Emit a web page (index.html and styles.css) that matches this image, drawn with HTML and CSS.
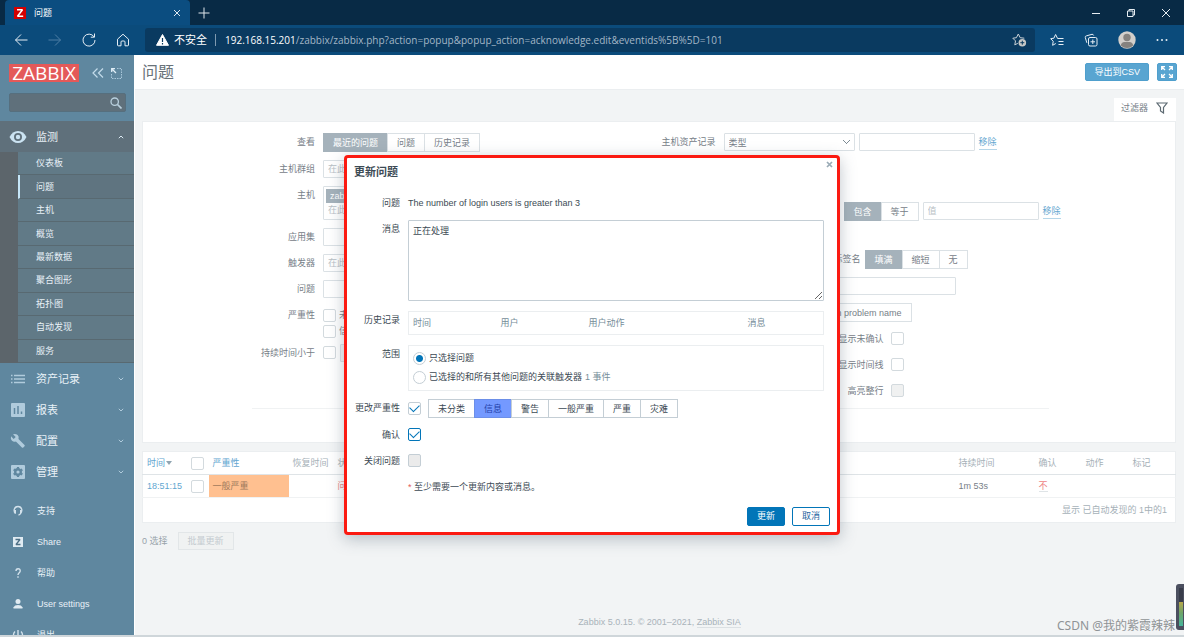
FILE: index.html
```html
<!DOCTYPE html>
<html lang="zh-CN">
<head>
<meta charset="utf-8">
<title>问题</title>
<link rel="stylesheet" href="styles.css">
</head>
<body>
<header class="browser">
  <div class="tabstrip">
    <div class="tab">
      <svg class="favicon" width="12" height="12" viewBox="0 0 12 12"><rect width="12" height="12" fill="#d40000"/><path d="M3 2.800h5.500L3.500 9.200H9.200" fill="none" stroke="#fff" stroke-width="1.500" stroke-linejoin="bevel"/></svg>
      <span class="tab-title">问题</span>
      <button class="bare" aria-label="关闭标签页"><svg width="8" height="8" viewBox="0 0 8 8"><path d="M1 1l6 6M7 1L1 7" stroke="#dfe9f2" fill="none"/></svg></button>
    </div>
    <button class="bare newtab" aria-label="新建标签页"><svg width="12" height="12" viewBox="0 0 12 12"><path d="M6 .5v11M.5 6h11" stroke="#dfe6ec" fill="none"/></svg></button>
    <div class="window-buttons">
      <button class="bare" aria-label="最小化"><svg width="10" height="10" viewBox="0 0 10 10"><path d="M1 5.500h8" stroke="#e6edf2"/></svg></button>
      <button class="bare" aria-label="还原"><svg width="10" height="10" viewBox="0 0 10 10"><path d="M1.500 3h5.500v5.500H1.500zM3 3V1.500h5.500V7H7" stroke="#e6edf2" fill="none"/></svg></button>
      <button class="bare" aria-label="关闭"><svg width="10" height="10" viewBox="0 0 10 10"><path d="M1 1l8 8M9 1L1 9" stroke="#e6edf2"/></svg></button>
    </div>
  </div>
  <div class="toolbar">
    <div class="nav-buttons">
      <button class="bare" aria-label="后退"><svg width="14" height="14" viewBox="0 0 14 14"><path d="M13.500 7H1.500M7 1.500L1.500 7 7 12.500" stroke="#e6eef5" fill="none"/></svg></button>
      <button class="bare" aria-label="前进"><svg width="14" height="14" viewBox="0 0 14 14"><path d="M.5 7h12M7 1.500L12.500 7 7 12.500" stroke="#4f7fa5" fill="none"/></svg></button>
      <button class="bare" aria-label="刷新"><svg width="14" height="14" viewBox="0 0 14 14"><path d="M12 3.800A6 6 0 1 0 13 7M12.500.5v3.700H8.800" stroke="#e6eef5" fill="none"/></svg></button>
      <button class="bare" aria-label="主页"><svg width="14" height="14" viewBox="0 0 14 14"><path d="M1.500 6.200L7 1.200l5.500 5V12q0 .8-.8.8H9V9q0-1-1-1H6Q5 8 5 9v3.800H2.300q-.8 0-.8-.8z" stroke="#e6eef5" fill="none"/></svg></button>
    </div>
    <div class="address">
      <svg width="13" height="12" viewBox="0 0 13 12"><path d="M6.500.5L12.500 11.300H.5z" fill="#fff" stroke="#fff" stroke-linejoin="round"/><path d="M6.500 4v4M6.500 9v1.500" stroke="#0a3a60" stroke-width="1.200"/></svg>
      <span class="insecure">不安全</span>
      <span class="address-sep"></span>
      <span class="url"><b>192.168.15.201</b>/zabbix/zabbix.php?action=popup&amp;popup_action=acknowledge.edit&amp;eventids%5B%5D=101</span>
      <svg width="15" height="14" viewBox="0 0 15 14"><path d="M12.300 5.200L8.200 4.700 6.300 1 4.400 4.700.8 5.200l2.700 2.700-.7 4 3-1.600" stroke="#c8d0d6" fill="none"/><circle cx="10.300" cy="9.700" r="3.800" fill="#c8c8c6"/><path d="M10.300 7.700v4M8.300 9.700h4" stroke="#0a3a60"/></svg>
    </div>
    <div class="tool-buttons">
      <button class="bare" aria-label="收藏夹"><svg width="14" height="14" viewBox="0 0 14 14"><path d="M13.500 5.500H7.600L5.600 1.500 3.900 5.200.7 5.700l2.500 2.600-.6 4 3.200-1.800M8.500 8.500h5M8.500 11.500h5" stroke="#e6eef5" fill="none"/></svg></button>
      <button class="bare" aria-label="集锦"><svg width="14" height="14" viewBox="0 0 14 14"><rect x="4.500" y="4.500" width="8.500" height="8.500" rx="1.500" stroke="#e6eef5" fill="none"/><path d="M8.800 6.500v4.500M6.500 8.800h4.500M2.800 9.800L1.300 4.500q-.3-1.300 1-1.600L8 1.300q1.300-.2 1.700 1.200" stroke="#e6eef5" fill="none"/></svg></button>
      <button class="bare" aria-label="个人资料"><svg width="18" height="18" viewBox="0 0 18 18"><circle cx="9" cy="9" r="8.700" fill="#d2cfcb"/><circle cx="9" cy="6.500" r="3.700" fill="#85827f"/><path d="M2.800 14.500q.5-3.500 3.700-3.500h5q3.200 0 3.700 3.500A8.700 8.700 0 0 1 2.800 14.500" fill="#85827f"/></svg></button>
      <button class="bare" aria-label="设置及其他"><svg width="12" height="4" viewBox="0 0 12 4"><circle cx="1.500" cy="2" r="1" fill="#e6eef5"/><circle cx="6" cy="2" r="1" fill="#e6eef5"/><circle cx="10.500" cy="2" r="1" fill="#e6eef5"/></svg></button>
    </div>
  </div>
</header>

<div class="app">
  <aside class="sidebar">
    <div class="brand">
      <a class="logo" href="#">ZABBIX</a>
      <button class="bare" aria-label="收起"><svg width="12" height="12" viewBox="0 0 12 12"><path d="M5.500 1.500L1 6l4.500 4.500M11 1.500L6.500 6l4.500 4.500" stroke="#c3dbea" stroke-width="1.200" fill="none"/></svg></button>
      <button class="bare" aria-label="隐藏"><svg width="11" height="11" viewBox="0 0 11 11"><path d="M6 .5h4.500v10H.5V6" stroke="#a9c7da" fill="none" stroke-dasharray="1.500 1"/><path d="M1.500 1.500l3.500 3.500M.7 4V.7H4" stroke="#e0eef7" fill="none" stroke-width="1.300"/></svg></button>
    </div>
    <form class="search">
      <input type="search" aria-label="搜索">
      <button class="bare" type="button" aria-label="搜索"><svg width="12" height="12" viewBox="0 0 12 12"><circle cx="4.700" cy="4.700" r="3.700" stroke="#b9d0de" stroke-width="1.300" fill="none"/><path d="M7.500 7.500l4 4" stroke="#b9d0de" stroke-width="1.700"/></svg></button>
    </form>
    <nav class="menu">
      <a class="menu-item open" href="#"><svg width="18" height="18" viewBox="0 0 18 18"><path d="M.5 9Q3.500 3 9 3t8.500 6Q14.500 15 9 15T.5 9z" fill="#cbe3f2"/><circle cx="9" cy="9" r="3.100" fill="#cbe3f2" stroke="#5f707b" stroke-width="1.800"/></svg><span>监测</span><svg width="6" height="4" viewBox="0 0 6 4"><path d="M.8 3.200L3 1l2.200 2.200" stroke="#dcebf4" fill="none"/></svg></a>
      <ul class="submenu">
        <li><a href="#">仪表板</a></li>
        <li class="active"><a href="#">问题</a></li>
        <li><a href="#">主机</a></li>
        <li><a href="#">概览</a></li>
        <li><a href="#">最新数据</a></li>
        <li><a href="#">聚合图形</a></li>
        <li><a href="#">拓扑图</a></li>
        <li><a href="#">自动发现</a></li>
        <li><a href="#">服务</a></li>
      </ul>
      <a class="menu-item" href="#"><svg width="18" height="18" viewBox="0 0 18 18"><path d="M2 5.500h1.500M5 5.500h11M2 9h1.500M5 9h11M2 12.500h1.500M5 12.500h11" stroke="#b0cbdc" stroke-width="1.700"/></svg><span>资产记录</span><svg width="6" height="4" viewBox="0 0 6 4"><path d="M.8.8L3 3 5.200.8" stroke="#b0cbdc" fill="none"/></svg></a>
      <a class="menu-item" href="#"><svg width="18" height="18" viewBox="0 0 18 18"><rect x="2" y="2" width="14" height="14" rx="1" fill="#b0cbdc"/><path d="M5.500 7v6M9 5v8M12.500 10.500V13" stroke="#5f879f" stroke-width="1.500"/></svg><span>报表</span><svg width="6" height="4" viewBox="0 0 6 4"><path d="M.8.8L3 3 5.200.8" stroke="#b0cbdc" fill="none"/></svg></a>
      <a class="menu-item" href="#"><svg width="18" height="18" viewBox="0 0 18 18"><path d="M4 2.300l2.700 2.600-2 2L2 4.300Q1.300 7 3 8.700q1.700 1.600 3.900.8l6 6q.7.700 1.400 0l1.200-1.200q.7-.7 0-1.400l-6-6q.8-2.200-.9-3.900Q6.700 1.500 4 2.300z" fill="#b0cbdc"/></svg><span>配置</span><svg width="6" height="4" viewBox="0 0 6 4"><path d="M.8.8L3 3 5.200.8" stroke="#b0cbdc" fill="none"/></svg></a>
      <a class="menu-item" href="#"><svg width="18" height="18" viewBox="0 0 18 18"><rect x="2" y="2" width="14" height="14" rx="1" fill="#b0cbdc"/><circle cx="9" cy="9" r="2.800" fill="none" stroke="#5f879f" stroke-width="2.400"/><path d="M9 4v1.500M9 12.500V14M4.700 6.500l1.300.8M12 10.700l1.300.8M4.700 11.500l1.300-.8M12 7.300l1.300-.8" stroke="#5f879f" stroke-width="2.200"/></svg><span>管理</span><svg width="6" height="4" viewBox="0 0 6 4"><path d="M.8.8L3 3 5.200.8" stroke="#b0cbdc" fill="none"/></svg></a>
    </nav>
    <nav class="menu user-menu">
      <a class="menu-item" href="#"><svg width="18" height="18" viewBox="0 0 18 18"><path d="M6.500 11.500Q4.800 10 5.200 7.500 6 4.500 9 4.500t3.800 3q.4 2.500-1.600 4.500l-1.700 1.200" stroke="#d3e2ec" stroke-width="1.300" fill="none"/><path d="M5 8h2v3.500H5.800zM11 8h2l-.8 3.500H11z" fill="#d3e2ec"/></svg><span>支持</span></a>
      <a class="menu-item" href="#"><svg width="18" height="18" viewBox="0 0 18 18"><rect x="4" y="4" width="10" height="10" fill="#e0ebf2"/><path d="M6.500 6.500h4.500l-4 5h4.500" stroke="#4d6f85" stroke-width="1.300" stroke-linejoin="bevel" fill="none"/></svg><span>Share</span></a>
      <a class="menu-item" href="#"><svg width="18" height="18" viewBox="0 0 18 18"><path d="M7 7q0-2.200 2.100-2.200T11.200 7Q11.200 8 10 9q-1 .8-1 2M9 12.300v1.500" stroke="#d3e2ec" stroke-width="1.400" fill="none"/></svg><span>帮助</span></a>
      <a class="menu-item" href="#"><svg width="18" height="18" viewBox="0 0 18 18"><circle cx="9" cy="6.500" r="2.500" fill="#e0ebf2"/><path d="M4.500 13.500v-1.200Q5.500 10 9 10t4.500 2.300v1.200z" fill="#e0ebf2"/></svg><span>User settings</span></a>
      <a class="menu-item" href="#"><svg width="18" height="18" viewBox="0 0 18 18"><path d="M6 5.500a4.500 4.500 0 1 0 6 0M9 4v5" stroke="#d3e2ec" stroke-width="1.400" fill="none"/></svg><span>退出</span></a>
    </nav>
  </aside>

  <main class="content">
    <div class="page-header">
      <h1>问题</h1>
      <button class="btn-faded">导出到CSV</button>
      <button class="btn-faded btn-full" aria-label="全屏"><svg width="14" height="14" viewBox="0 0 14 14"><path d="M1.700 5V1.700H5M9 1.700h3.300V5M12.300 9v3.300H9M5 12.300H1.700V9M2 2l3 3M12 2L9 5M12 12L9 9M2 12l3-3" stroke="#fff" stroke-width="1.300" fill="none"/></svg></button>
    </div>

    <div class="filter-tab"><a href="#">过滤器 <svg width="12" height="12" viewBox="0 0 12 12"><path d="M1 1h10L7.500 5.500V11l-3-2V5.500z" stroke="#5d6a72" stroke-width="1.200" fill="none"/></svg></a></div>
    <form class="filter">
      <div class="filter-forms">
        <div class="form-col left">
          <div class="row"><span class="lbl">查看</span><div class="seg"><button type="button" class="on">最近的问题</button><button type="button">问题</button><button type="button">历史记录</button></div></div>
          <div class="row"><label class="lbl" for="f-groups">主机群组</label><input class="text grow" id="f-groups" placeholder="在此输入搜索"></div>
          <div class="row"><label class="lbl" for="f-hosts">主机</label><div class="multi grow"><span class="chip">zabbix</span><input id="f-hosts" placeholder="在此输入搜索"></div></div>
          <div class="row"><label class="lbl" for="f-app">应用集</label><input class="text grow" id="f-app"></div>
          <div class="row"><label class="lbl" for="f-trig">触发器</label><input class="text grow" id="f-trig" placeholder="在此输入搜索"></div>
          <div class="row"><label class="lbl" for="f-prob">问题</label><input class="text grow" id="f-prob"></div>
          <div class="row"><span class="lbl">严重性</span><div class="checks"><label><input type="checkbox">未分类</label><label><input type="checkbox">信息</label></div></div>
          <div class="row"><label class="lbl" for="f-age">持续时间小于</label><input type="checkbox" id="f-age"><input class="text days" aria-label="天数" disabled></div>
        </div>
        <div class="form-col right">
          <div class="row"><label class="lbl" for="f-inv">主机资产记录</label><select id="f-inv" class="inv"><option>类型</option></select><input class="text field" aria-label="资产值"><a class="act" href="#">移除</a></div>
          <div class="row tags"><span class="lbl"></span><input class="text field" aria-label="标记"><div class="seg"><button type="button" class="on">包含</button><button type="button">等于</button></div><input class="text field" placeholder="值" aria-label="标记值"><a class="act" href="#">移除</a></div>
          <div class="row"><span class="lbl"></span><span class="inline-lbl names">标签名</span><div class="seg"><button type="button" class="on">填满</button><button type="button">缩短</button><button type="button">无</button></div></div>
          <div class="row"><span class="lbl"></span><input class="text priority" aria-label="标签显示优先级"></div>
          <div class="row"><span class="lbl"></span><div class="seg opdata"><button type="button">With problem name</button></div></div>
          <div class="row"><span class="lbl"></span><label class="inline-lbl" for="f-unack">只显示未确认</label><input type="checkbox" id="f-unack"></div>
          <div class="row"><span class="lbl"></span><label class="inline-lbl" for="f-line">显示时间线</label><input type="checkbox" id="f-line"></div>
          <div class="row"><span class="lbl"></span><label class="inline-lbl" for="f-hl">高亮整行</label><input type="checkbox" id="f-hl" disabled></div>
        </div>
      </div>
      <div class="filter-buttons"><button type="button" class="btn-faded">应用</button></div>
    </form>

    <table class="list">
      <colgroup><col class="c-time"><col class="c-check"><col class="c-sev"><col class="c-rec"><col><col class="c-dur"><col class="c-s"><col class="c-s"><col class="c-s"></colgroup>
      <thead><tr><th><a href="#">时间 <svg width="6" height="4" viewBox="0 0 6 4"><path d="M0 0h6L3 4z" fill="#8fa4b1"/></svg></a></th><th><input type="checkbox" aria-label="全选"></th><th><a href="#">严重性</a></th><th>恢复时间</th><th>状态</th><th>持续时间</th><th>确认</th><th>动作</th><th>标记</th></tr></thead>
      <tbody><tr><td><a href="#">18:51:15</a></td><td><input type="checkbox" aria-label="选择"></td><td class="average">一般严重</td><td></td><td class="problem">问题</td><td>1m 53s</td><td><a class="no" href="#">不</a></td><td></td><td></td></tr></tbody>
      <tfoot><tr><td colspan="9">显示 已自动发现的 1中的1</td></tr></tfoot>
    </table>
    <div class="bulk"><span>0 选择</span><button disabled>批量更新</button></div>
    <footer class="foot">Zabbix 5.0.15. © 2001–2021, <a href="#">Zabbix SIA</a></footer>
  </main>
</div>
<div class="taskbar"></div>

<div class="overlay">
  <section class="dialog" role="dialog" aria-labelledby="dlg-title">
    <button class="bare dialog-close" aria-label="关闭"><svg width="7" height="7" viewBox="0 0 7 7"><path d="M1 1l5 5M6 1L1 6" stroke="#9aabb6" stroke-width="1.700"/></svg></button>
    <h2 id="dlg-title">更新问题</h2>
    <form class="dialog-form">
      <span class="lbl">问题</span><div class="value">The number of login users is greater than 3</div>
      <label class="lbl" for="msg">消息</label><textarea id="msg">正在处理</textarea>
      <span class="lbl boxed">历史记录</span>
      <table class="history boxed"><colgroup><col class="h-a"><col class="h-a"><col class="h-b"><col></colgroup><thead><tr><th>时间</th><th>用户</th><th>用户动作</th><th>消息</th></tr></thead></table>
      <span class="lbl boxed">范围</span>
      <div class="scope boxed"><label><input type="radio" name="scope" checked>只选择问题</label><label><input type="radio" name="scope">已选择的和所有其他问题的关联触发器 <small>1 事件</small></label></div>
      <label class="lbl" for="chg">更改严重性</label>
      <div class="severity"><input type="checkbox" id="chg" checked><div class="seg"><button type="button">未分类</button><button type="button" class="info">信息</button><button type="button">警告</button><button type="button">一般严重</button><button type="button">严重</button><button type="button">灾难</button></div></div>
      <label class="lbl" for="ack">确认</label><div class="value"><input type="checkbox" id="ack" class="focused" checked></div>
      <label class="lbl" for="cls">关闭问题</label><div class="value"><input type="checkbox" id="cls" disabled></div>
      <span></span><div class="value"><i class="star">*</i> 至少需要一个更新内容或消息。</div>
    </form>
    <div class="dialog-buttons"><button class="primary">更新</button><button>取消</button></div>
  </section>
</div>
<div class="meter"><span></span></div>
<div class="credit">CSDN @我的紫霞辣辣</div>
</body>
</html>
```

FILE: styles.css
```css
* { box-sizing: border-box; }
body {
  margin: 0;
  height: 100vh;
  display: flex;
  flex-direction: column;
  overflow: hidden;
  position: relative;
  background: #f2f4f5;
  color: #778088;
  font: 9px/14px "Liberation Sans", "Noto Sans CJK SC", sans-serif;
}
a { color: inherit; text-decoration: none; }
button, input, select, textarea { font: inherit; color: inherit; margin: 0; }
svg { display: block; flex: none; }
.bare { border: 0; padding: 0; background: none; display: flex; align-items: center; justify-content: center; }

/* browser frame */
.browser { flex: none; color: #fff; }
.tabstrip { display: flex; align-items: center; height: 25px; padding-left: 5px; background: #082a45; }
.tab { width: 185px; height: 25px; display: flex; align-items: center; gap: 8px; padding: 0 9px; background: #0b4d80; border-radius: 4px 4px 0 0; }
.tab-title { flex: 1; }
.newtab { margin-left: 8px; }
.window-buttons { margin-left: auto; display: flex; gap: 25px; padding-right: 13px; }
.toolbar { display: flex; align-items: center; height: 30px; background: #0b4b7b; }
.nav-buttons { display: flex; gap: 20px; padding-left: 14px; width: 145px; }
.address { flex: 1; min-width: 0; height: 24px; display: flex; align-items: center; padding: 0 8px 0 11px; background: #0a3a60; border-radius: 3px; font: 10px/16px "Open Sans", "Noto Sans CJK SC", sans-serif; }
.insecure { margin-left: 5px; font-size: 11px; }
.address-sep { width: 1px; height: 12px; background: #7f9ab0; margin: 0 9px 0 8px; }
.url { flex: 1; color: #a3b6c6; white-space: nowrap; overflow: hidden; }
.url b { font-weight: 400; color: #fff; }
.tool-buttons { display: flex; align-items: center; gap: 20px; padding: 0 16px 0 15px; }

/* sidebar */
.app { flex: 1; min-height: 0; display: flex; }
.sidebar { width: 134px; flex: none; overflow: hidden; background: #5f879f; color: #e8f1f7; }
.brand { display: flex; align-items: center; padding: 9px 12px 0 9px; }
.logo { width: 70px; height: 18px; margin-right: 13px; background: #e45959; color: #fff; font: 19px/19px "Open Sans", sans-serif; text-align: center; }
.brand .bare + .bare { margin-left: 7px; }
.search { display: flex; align-items: center; margin: 11px 8px 9px 9px; height: 19px; padding-right: 3px; background: #5f707b; border: 1px solid #566f7e; border-radius: 2px; }
.search input { flex: 1; min-width: 0; border: 0; background: none; outline: 0; }
.menu-item { display: flex; align-items: center; gap: 9px; height: 31px; padding: 0 10px 0 9px; font-size: 11px; }
.menu-item span { flex: 1; }
.menu-item.open { background: #5f707b; }
.submenu { list-style: none; margin: 0; padding: 0 0 0 18px; height: 211px; display: grid; grid-auto-rows: 1fr; background: #5c656b; }
.submenu li { display: flex; align-items: center; padding-left: 18px; background: #617a87; border-bottom: 1px solid #586971; }
.submenu .active { padding-left: 16px; background: #5f7480; border-left: 2px solid #c6e6f8; }
.user-menu { padding-top: 8px; }
.user-menu .menu-item { gap: 10px; font-size: 9px; }

/* page */
.content { flex: 1; min-width: 0; display: flex; flex-direction: column; border-left: 1px solid #fff; }
.page-header { display: flex; align-items: center; gap: 8px; height: 35px; padding: 0 7px; background: #fff; border-bottom: 1px solid #ebeef0; }
.page-header h1 { margin: 0 auto 0 0; padding-top: 2px; font-size: 16px; line-height: 24px; font-weight: 400; color: #697279; }
.btn-faded { height: 18px; padding: 0 8px; border: 1px solid #4f9fcd; border-radius: 2px; background: #59a5d1; color: #fff; line-height: 16px; }
.btn-full { padding: 0 2px; }
.filter-tab { display: flex; justify-content: flex-end; padding: 8px 8px 0 7px; }
.filter-tab a { display: flex; align-items: center; gap: 8px; height: 23px; padding: 0 8px 4px 7px; background: #fff; }
.filter { margin: 0 8px 8px 7px; height: 322px; background: #fff; border: 1px solid #ebeef0; }
.filter-forms { margin: 11px 126px 0 109px; height: 276px; display: grid; grid-template-columns: 1fr 1fr; border-bottom: 1px solid #f0f2f3; }
.form-col { display: flex; flex-direction: column; gap: 8px; min-width: 0; }
.row { display: flex; align-items: flex-start; gap: 4px; line-height: 18px; min-height: 18px; white-space: nowrap; }
.row .lbl { flex: none; text-align: right; margin-right: 4px; }
.left .lbl { width: 63px; }
.right .lbl { width: 65px; }
.left .row:nth-child(7) { height: 30px; }
.text, .multi, select { height: 18px; padding: 0 4px; border: 1px solid #dbe1e5; background: #fff; border-radius: 1px; outline: 0; min-width: 0; }
::placeholder { color: #b9c0c5; opacity: 1; }
.grow { flex: 1; }
.multi { height: 34px; padding: 2px; }
.multi input { display: block; width: 100%; border: 0; padding: 0 2px; height: 14px; background: none; }
.chip { display: table; padding: 0 4px; line-height: 14px; background: #a5b2bb; color: #fff; }
.checks { display: grid; gap: 2px; padding-top: 2px; }
.checks label { display: flex; align-items: center; gap: 3px; line-height: 14px; }
.days { width: 30px; background: #f2f4f5; }
.field { flex: none; width: 116px; }
select { appearance: none; width: 131px; }
.inv { background-image: linear-gradient(45deg, transparent 45%, #7d8b94 45% 58%, transparent 58%), linear-gradient(-45deg, transparent 45%, #7d8b94 45% 58%, transparent 58%); background-size: 4px 4px; background-position: right 7px center, right 4px center; background-repeat: no-repeat; }
.act { color: #62a6d0; line-height: 14px; margin-top: 2px; border-bottom: 1px solid #b5d6e9; }
.row.tags { height: 83px; padding-top: 43px; }
.inline-lbl { width: 160px; text-align: right; margin-right: 3px; }
.inline-lbl.names { width: 137px; margin-right: 0; }
.priority { width: 232px; }
.opdata { width: 188px; justify-content: flex-end; }
.seg { display: flex; }
.seg button { height: 19px; padding: 0 9px; border: 1px solid #dbe1e5; margin-left: -1px; background: #fff; line-height: 16px; white-space: nowrap; }
.seg button:first-child { margin-left: 0; }
.seg .on { background: #a5b2bb; border-color: #a5b2bb; color: #fff; }
.filter-buttons { display: flex; justify-content: center; padding-top: 8px; }

input[type="checkbox"], input[type="radio"] { appearance: none; flex: none; display: grid; place-items: center; width: 13px; height: 13px; border: 1px solid #d3dade; border-radius: 2px; background: #fff; }
.row > input[type="checkbox"] { margin-top: 2px; }
input[type="checkbox"]:disabled { background: #f0f1f1; }

/* problem list */
.list { margin: 0 8px 0 7px; border-collapse: collapse; table-layout: fixed; background: #fff; border: 1px solid #ebeef0; }
.list th, .list td { height: 23px; padding: 0 4px; text-align: left; font-weight: 400; white-space: nowrap; border-bottom: 1px solid #f0f2f3; }
.list th { color: #a6b1b8; border-bottom: 1px solid #dfe4e7; height: 23px; }
.list a { color: #62a6d0; }
.list th svg { display: inline-block; vertical-align: 1px; margin-left: -2px; }
.list tfoot td { height: 25px; text-align: right; padding-right: 8px; color: #a6b1b8; border: 0; }
.c-time { width: 44px; }
.c-check { width: 22px; }
.c-sev, .c-dur { width: 80px; }
.c-rec { width: 45px; }
.c-s { width: 47px; }
.list .average { background: #ffc090; color: #a07a5d; }
.list .problem, .list .no { color: #ee8585; }
.list .no { border-bottom: 1px solid #dfe4e7; }
.bulk { display: flex; align-items: center; gap: 10px; padding: 9px 7px; color: #98a3aa; }
.bulk button { height: 18px; padding: 0 9px; border: 1px solid #e2e6e8; background: #f0f2f2; color: #c3cacf; line-height: 16px; }
.foot { margin-top: auto; padding-bottom: 6px; text-align: center; color: #a9b3ba; }
.foot a { border-bottom: 1px solid #dbe0e3; }
.taskbar { flex: none; height: 2px; background: #cfd6da; }

/* update dialog */
.overlay { position: absolute; inset: 0; display: flex; justify-content: center; align-items: flex-start; padding-top: 155px; }
.dialog { position: relative; width: 496px; max-width: 100%; padding: 7px 7px 6px; background: #fff; color: #3c4a54; border: 3px solid #fb1a11; border-radius: 4px; box-shadow: 0 4px 16px rgba(70, 90, 105, .35); }
.dialog-close { position: absolute; top: 3px; right: 4px; }
.dialog h2 { margin: 0 0 15px; font-size: 11px; line-height: 14px; font-weight: 700; }
.dialog-form { display: grid; grid-template-columns: 46px 1fr; gap: 8px; padding-right: 6px; }
.dialog-form .lbl { text-align: right; white-space: nowrap; justify-self: end; padding-top: 2px; }
.dialog-form .boxed { margin-top: 2px; }
.dialog-form .value { line-height: 14px; min-height: 18px; padding-top: 2px; }
.dialog-form textarea { display: block; width: 100%; height: 81px; padding: 3px 4px; border: 1px solid #c4ced5; border-radius: 1px; outline: 0; resize: vertical; }
.history { width: 100%; border-collapse: collapse; table-layout: fixed; border: 1px solid #ebeef0; }
.history th { height: 23px; padding: 0 4px; text-align: left; font-weight: 400; color: #768d99; }
.h-a { width: 88px; }
.h-b { width: 159px; }
.scope { display: grid; gap: 6px; padding: 6px 4px; border: 1px solid #ebeef0; }
.scope label { display: flex; align-items: center; gap: 3px; line-height: 13px; }
.scope small { font-size: inherit; color: #768d99; }
input[type="radio"] { border-radius: 50%; border-color: #c4ced5; }
input[type="radio"]:checked { background: radial-gradient(#0275b8 0 3px, #fff 4px); }
.severity { display: flex; align-items: center; gap: 7px; }
.dialog input[type="checkbox"] { border-color: #c4ced5; }
.dialog input[type="checkbox"]:disabled { background: #ebebeb; }
.dialog input.focused { border-color: #0275b8; }
.dialog input[type="checkbox"]:checked::before { content: ""; width: 8px; height: 5px; margin-bottom: 3px; border: solid #0275b8; border-width: 0 0 1px 1px; transform: rotate(-45deg); }
.dialog .seg button { border-color: #c4ced5; }
.dialog .seg .info { background: #7499ff; color: #1f3faa; border-color: #6c8fe8; }
.star { color: #e45959; font-style: normal; }
.dialog-buttons { display: flex; justify-content: flex-end; gap: 7px; margin-top: 11px; }
.dialog-buttons button { height: 19px; padding: 0 9px; border: 1px solid #0275b8; border-radius: 2px; background: #fff; color: #1f65a0; line-height: 17px; }
.dialog-buttons .primary { background: #0275b8; color: #fff; }

/* desktop widgets above the page */
.meter { position: absolute; right: 0; bottom: 7px; width: 8px; height: 46px; padding: 4px 1px 4px 3px; background: #4b4f5f; border-radius: 3px 0 0 3px; }
.meter span { display: block; height: 100%; background: linear-gradient(#383c4a 38%, #b5a84c 38%, #6fa468 65%, #46b59b); }
.credit { position: absolute; right: 9px; bottom: 3px; color: #8f9396; font: 12px/16px "Noto Sans", "Noto Sans CJK SC", sans-serif; }
```
